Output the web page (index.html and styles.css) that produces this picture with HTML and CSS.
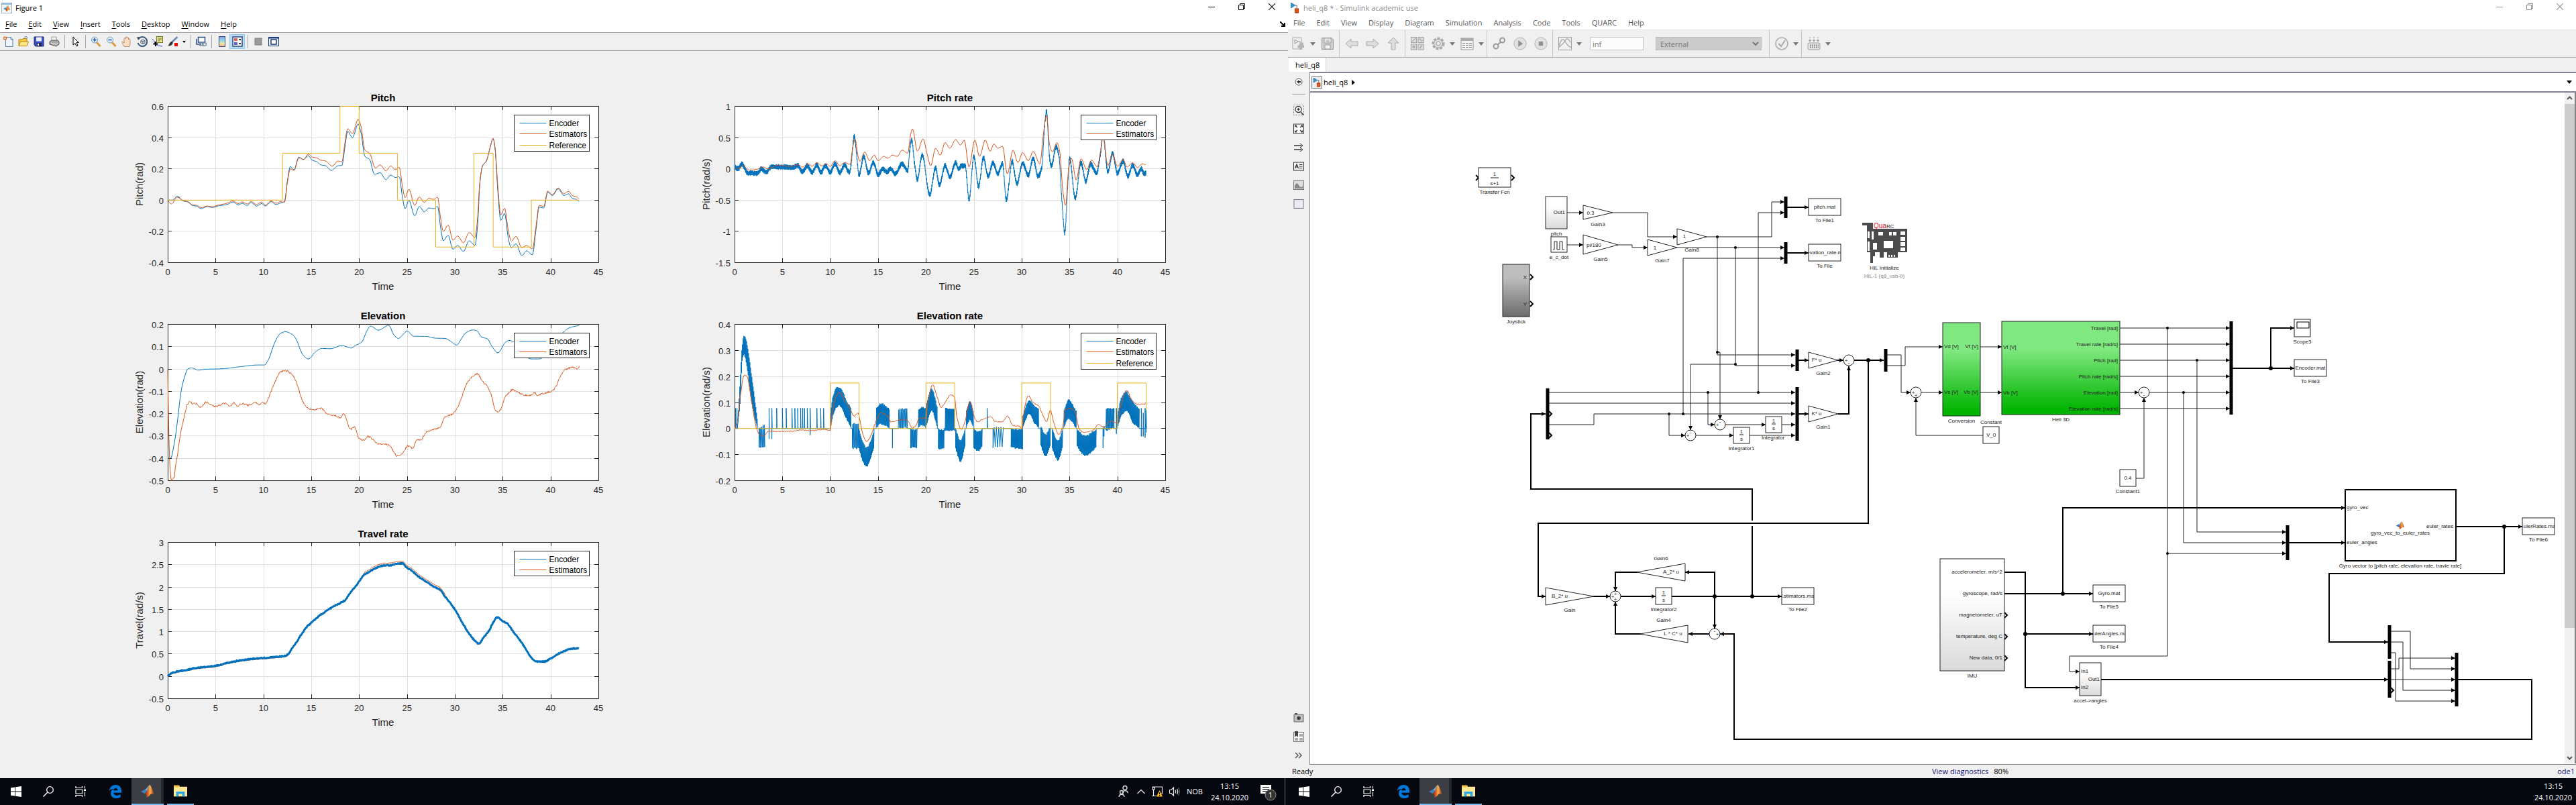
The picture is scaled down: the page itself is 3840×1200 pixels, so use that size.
FILE: index.html
```html
<!DOCTYPE html>
<html lang="en">
<head>
<meta charset="utf-8">
<title>Figure 1 / heli_q8</title>
<link rel="stylesheet" href="styles.css">
</head>
<body>
<svg class="defs" aria-hidden="true">
  <defs>
    <linearGradient id="flame" x1="0" x2="1"><stop offset="0" stop-color="#8c1d12"/><stop offset=".35" stop-color="#e0641c"/><stop offset=".55" stop-color="#f7b253"/><stop offset="1" stop-color="#a3240f"/></linearGradient>
    <linearGradient id="rainbow" x1="0" y1="0" x2="0" y2="1"><stop offset="0" stop-color="#8f9be8"/><stop offset=".4" stop-color="#8fd8e8"/><stop offset=".7" stop-color="#f3ec9a"/><stop offset="1" stop-color="#f2a488"/></linearGradient>
    <symbol id="i-matlab" viewBox="0 0 24 24"><path d="M1 13 L8 9.500 L11 12.500 L7.500 16.500 Z" fill="#3f7fc0"/><path d="M8 9.500 C11 8 13 4 15.500 2 L11 12.500 Z" fill="#6ab0d8"/><path d="M15.500 2 C18 3 20 12 23 18 C20 16 18 16 15.500 19 C14 21 12 22.500 10.500 22 C10.500 18 9.500 17 7.500 16.500 C11 14 13 7 15.500 2 Z" fill="url(#flame)"/></symbol>
    <symbol id="i-start" viewBox="0 0 16 16"><path d="M0 2.300 L6.500 1.400 V7.600 H0 Z M7.300 1.300 L16 0 V7.600 H7.300 Z M0 8.400 H6.500 V14.600 L0 13.700 Z M7.300 8.400 H16 V16 L7.300 14.700 Z" fill="#fff"/></symbol>
    <symbol id="i-search" viewBox="0 0 16 16"><circle cx="10.500" cy="5.500" r="4.800" fill="none" stroke="#fff" stroke-width="1.300"/><path d="M7 9 L.5 15.500" stroke="#fff" stroke-width="1.400"/></symbol>
    <symbol id="i-tasks" viewBox="0 0 16 16"><path d="M1 0 V2.500 H10.500 V0 M1 16 V13.500 H10.500 V16 M1 5 H10.500 V11 H1 Z M14.500 0 V3.500 M14.500 8.500 V15" fill="none" stroke="#fff" stroke-width="1.200"/><path d="M13 4.500 H16 V7 H13 Z" fill="#fff"/></symbol>
    <symbol id="i-edge" viewBox="0 0 20 22"><path d="M0 9.500 C1 3.500 5 0 10.500 0 C16.500 0 20 4.500 20 9.500 V13 H6.800 C7 17 12 18.800 18.500 15.800 V20 C12 23.500 2.500 22.500 2.300 14 C2.300 10.500 4 8 7.200 6.600 C4 6.800 1.500 7.800 0 9.500 Z M7 9.200 H14 C13.800 4 7.500 4 7 9.200 Z" fill="#0078d7" fill-rule="evenodd"/></symbol>
    <symbol id="i-folder" viewBox="0 0 22 18"><path d="M0 0 H9 L10 2 H22 V18 H0 Z" fill="#ffe793"/><path d="M0 0 H9 L8 3 H0 Z" fill="#f0c23c"/><path d="M4 18 V10 H18 V18 H14 V14 H8 V18 Z" fill="#31a6e0"/></symbol>
    <symbol id="i-model" viewBox="0 0 16 20"><path d="M1 0 L9 5 L1 10 Z" fill="#2e9bd6" stroke="#1d5b86" stroke-width=".8"/><path d="M9 5 H12 V10" fill="none" stroke="#444"/><path d="M8.500 11 H15 V19 H8.500 Z" fill="#e2521b" stroke="#8f2b08"/></symbol>
    <symbol id="i-min" viewBox="0 0 10 10"><path d="M0 5.500 H10" stroke="currentColor"/></symbol>
    <symbol id="i-max" viewBox="0 0 10 10"><path d="M.5 2.500 H7.500 V9.500 H.5 Z M2.500 2.500 V.5 H9.500 V7.500 H7.500" fill="none" stroke="currentColor"/></symbol>
    <symbol id="i-close" viewBox="0 0 10 10"><path d="M0 0 L10 10 M10 0 L0 10" stroke="currentColor" stroke-width="1.100"/></symbol>
    <symbol id="i-drop" viewBox="0 0 8 5"><path d="M0 0 H8 L4 5 Z" fill="currentColor"/></symbol>
  </defs>
</svg>

<div class="desktop">
  <section class="screen">
    <main class="window">
      <header class="titlebar">
        <span class="title"><svg class="app-icon" viewBox="0 0 16 16"><rect x=".5" y=".5" width="15" height="15" fill="#f2f6fa" stroke="#9fb4c8"/><rect x="1" y="1" width="14" height="2" fill="#8fc3ea"/><use href="#i-matlab" x="2" y="3" width="12" height="11"/></svg>Figure 1</span>
        <span class="controls"><button aria-label="Minimize"><svg><use href="#i-min"/></svg></button><button aria-label="Restore"><svg><use href="#i-max"/></svg></button><button aria-label="Close"><svg><use href="#i-close"/></svg></button></span>
      </header>
      <nav class="menubar menubar-figure">
        <button><u>F</u>ile</button><button><u>E</u>dit</button><button><u>V</u>iew</button><button><u>I</u>nsert</button><button><u>T</u>ools</button><button><u>D</u>esktop</button><button><u>W</u>indow</button><button><u>H</u>elp</button>
        <svg class="dock" viewBox="0 0 8 8"><path d="M0 0 L6 6 M7 2 V7 H2" fill="none" stroke="#000" stroke-width="2"/></svg>
      </nav>
      <div class="tools">
        <button aria-label="New figure"><svg viewBox="0 0 16 16"><path d="M4.500 1.500 H12 L15 4.500 V15.500 H4.500 Z" fill="#eef5ff" stroke="#5b7fae"/><path d="M12 1.500 V4.500 H15" fill="none" stroke="#5b7fae"/><circle cx="3.500" cy="3" r="2" fill="#fff" stroke="#e06c2a" stroke-width="1.500"/></svg></button>
        <button aria-label="Open"><svg viewBox="0 0 16 16"><path d="M1 5 H6 L7 3.500 H13 V14.500 H1 Z" fill="#f6c944" stroke="#b58513"/><path d="M3.500 8 H15.500 L13 14.500 H1 Z" fill="#ffe88c" stroke="#b58513"/><path d="M9 2 C11 0 13 0 14 3" fill="none" stroke="#3a6ea5"/></svg></button>
        <button aria-label="Save"><svg viewBox="0 0 16 16"><path d="M1 1 H15 V15 H3 L1 13 Z" fill="#3d4fc0" stroke="#1e2b7a"/><rect x="4" y="1.500" width="8" height="6" fill="#e8efff"/><rect x="5" y="10" width="7" height="5" fill="#222a55"/><rect x="6" y="11" width="2" height="3" fill="#fff"/></svg></button>
        <button aria-label="Print"><svg viewBox="0 0 16 16"><path d="M4 1 L11 1 L12 7 H4 Z" fill="#f7f7f7" stroke="#999"/><path d="M1 8 L4 6 H13 L15 8 V12 L11 15 L1 12 Z" fill="#a9a9a9" stroke="#5c5c5c"/><path d="M3 10 L11 12 L14 10" fill="none" stroke="#e8e8e8"/></svg></button>
        <i class="sep"></i>
        <button aria-label="Edit plot"><svg viewBox="0 0 16 16"><path d="M5 1 V13 L8 10.500 L10 15 L12 14 L10 9.500 H13.500 Z" fill="#fff" stroke="#000"/></svg></button>
        <i class="sep"></i>
        <button aria-label="Zoom in"><svg viewBox="0 0 16 16"><path d="M9 9 L14.500 15" stroke="#e09a3e" stroke-width="3"/><circle cx="6" cy="5.500" r="4.500" fill="#dceffc" stroke="#7a97b5"/><path d="M6 3 V8 M3.500 5.500 H8.500" stroke="#1c4fa0" stroke-width="1.500"/></svg></button>
        <button aria-label="Zoom out"><svg viewBox="0 0 16 16"><path d="M9 9 L14.500 15" stroke="#e09a3e" stroke-width="3"/><circle cx="6" cy="5.500" r="4.500" fill="#dceffc" stroke="#7a97b5"/><path d="M3.500 5.500 H8.500" stroke="#1c4fa0" stroke-width="1.500"/></svg></button>
        <button aria-label="Pan"><svg viewBox="0 0 16 16"><path d="M4 15 L1 9.500 C0 8 2 7.500 3 9 L4 10 V4 C4 2 6 2 6 4 V2 C6 .5 8 .5 8 2 V2.500 C8 1 10.500 1 10.500 3 V5 C11 3.500 13 4 13 5.500 V11 L12 15.500 H5 Z" fill="#fbe0c6" stroke="#a9764f" stroke-width=".8"/></svg></button>
        <button aria-label="Rotate 3D"><svg viewBox="0 0 16 16"><path d="M2.500 4 A7 7 0 1 1 1.500 10" fill="none" stroke="#3d5673" stroke-width="2"/><path d="M0 1 L6 1.500 L2 6 Z" fill="#3d5673"/><path d="M6 6.500 L9 5 L12 6.500 V10 L9 11.500 L6 10 Z M6 6.500 L9 8 L12 6.500 M9 8 V11.500" fill="none" stroke="#3d5673"/></svg></button>
        <button aria-label="Data cursor"><svg viewBox="0 0 16 16"><rect x="6.500" y=".5" width="9" height="9" fill="#f0eea0" stroke="#77752a"/><path d="M8 3 H14 M8 5 H14 M8 7 H12" stroke="#77752a"/><path d="M0 4 Q3 6 4 11 Q8 15 15 15" fill="none" stroke="#3648e0"/><path d="M5 8 V15 M1.500 11.500 H8.500" stroke="#000" stroke-width="2"/></svg></button>
        <button aria-label="Brush"><svg viewBox="0 0 16 16"><path d="M14.500 1 L6 9" stroke="#6d86b8" stroke-width="2.500"/><path d="M7 8 C9 11 6 15 0 14 C3 13 2 8 7 8 Z" fill="#333"/><rect x="10" y="10" width="5" height="5" fill="#f00"/></svg></button>
        <button class="drop" aria-label="Brush colour"><svg><use href="#i-drop"/></svg></button>
        <i class="sep"></i>
        <button aria-label="Link plot"><svg viewBox="0 0 16 16"><path d="M3.500 1.500 H13.500 V9 H3.500 Z" fill="#fff" stroke="#2b4a7c" stroke-width="1.500"/><path d="M1 4 V12 H8" fill="none" stroke="#2b4a7c" stroke-width="1.500"/><rect x="5" y="10" width="6" height="4" rx="2" fill="none" stroke="#7b90a8" stroke-width="1.500"/><rect x="9.500" y="10" width="6" height="4" rx="2" fill="none" stroke="#7b90a8" stroke-width="1.500"/></svg></button>
        <i class="sep"></i>
        <button aria-label="Insert colorbar"><svg viewBox="0 0 16 16"><rect x="3.500" y=".5" width="9" height="15" fill="url(#rainbow)" stroke="#2b4a7c"/></svg></button>
        <button class="on" aria-label="Insert legend"><svg viewBox="0 0 16 16"><rect x="1" y="1" width="14" height="14" fill="#fff" stroke="#2b4a7c" stroke-width="1.500"/><rect x="3" y="3" width="5" height="4" fill="#e8605c"/><rect x="3" y="9" width="5" height="4" fill="#5c60e8"/><path d="M10 5 H13 M10 11 H13" stroke="#000" stroke-width="1.500"/></svg></button>
        <i class="sep"></i>
        <button aria-label="Hide plot tools"><svg viewBox="0 0 16 16"><rect x="3" y="3" width="10" height="10" fill="#9a9a9a" stroke="#7e7e7e"/></svg></button>
        <button aria-label="Show plot tools"><svg viewBox="0 0 16 16"><rect x=".5" y="1.500" width="15" height="13" fill="#eef3fa" stroke="#1e3c74"/><rect x=".5" y="1.500" width="15" height="2" fill="#1e3c74"/><rect x="4" y="5" width="8" height="7" fill="#fff" stroke="#1e3c74" stroke-width="1.500"/></svg></button>
      </div>
      <div class="figure" id="figure"></div>
    </main>
    <footer class="taskbar">
      <button aria-label="Start"><svg class="g16"><use href="#i-start"/></svg></button>
      <button aria-label="Search"><svg class="g16"><use href="#i-search"/></svg></button>
      <button aria-label="Task view"><svg class="g16"><use href="#i-tasks"/></svg></button>
      <button class="task" aria-label="Edge"><svg class="g20"><use href="#i-edge"/></svg></button>
      <button class="active" aria-label="MATLAB"><svg class="g24"><use href="#i-matlab"/></svg></button>
      <button class="running" aria-label="File Explorer"><svg class="g20"><use href="#i-folder"/></svg></button>
      <div class="tray">
        <svg class="g20" viewBox="0 0 20 20"><g fill="none" stroke="#ddd" stroke-width="1.400"><circle cx="12" cy="4.500" r="3"/><path d="M8.500 12 C9 8 15 7 16.500 12"/><circle cx="7" cy="11" r="2.500"/><path d="M3 18 C3.500 13 10.500 13 11 18"/></g></svg>
        <svg class="g12" viewBox="0 0 12 12"><path d="M.5 9 L6 3.500 L11.500 9" fill="none" stroke="#ddd" stroke-width="1.400"/></svg>
        <svg class="g16" viewBox="0 0 16 16"><path d="M3 3 V1 H15.500 V11 H9 M1 1 H4 V5 H1 Z M2.500 5 V14 M0 14.500 H7" fill="none" stroke="#eee" stroke-width="1.200"/><path d="M11.500 6 L16 15.500 H7 Z" fill="#fdb813"/><path d="M11.500 9 V12 M11.500 13 V14.500" stroke="#000"/></svg>
        <svg class="g16" viewBox="0 0 16 16"><path d="M.5 5.500 H3 L6.500 2 V14 L3 10.500 H.5 Z M9 5.500 Q10.500 8 9 10.500 M11.500 4 Q14 8 11.500 12" fill="none" stroke="#eee" stroke-width="1.200"/><path d="M13.500 2 Q17 8 13.500 14" fill="none" stroke="#777"/></svg>
        <span class="lang">NOB</span>
        <time class="clock">13:15<br>24.10.2020</time>
        <svg class="notice" viewBox="0 0 28 28"><path d="M2 4 H18 V17 H13 L9 21 V17 H2 Z" fill="#fff"/><path d="M5 7.500 H15 M5 10.500 H15 M5 13.500 H11" stroke="#000" stroke-width="1.200"/><circle cx="17" cy="19" r="8" fill="#333" stroke="#8b8b8b"/><text x="17" y="23" class="badge">1</text></svg>
        <i class="peek"></i>
      </div>
    </footer>
  </section>

  <section class="screen">
    <main class="window">
      <header class="titlebar inactive">
        <span class="title"><svg class="app-icon"><use href="#i-model"/></svg>heli_q8 * - Simulink academic use</span>
        <span class="controls"><button aria-label="Minimize"><svg><use href="#i-min"/></svg></button><button aria-label="Restore"><svg><use href="#i-max"/></svg></button><button aria-label="Close"><svg><use href="#i-close"/></svg></button></span>
      </header>
      <nav class="menubar menubar-model">
        <button>File</button><button>Edit</button><button>View</button><button>Display</button><button>Diagram</button><button>Simulation</button><button>Analysis</button><button>Code</button><button>Tools</button><button>QUARC</button><button>Help</button>
      </nav>
      <div class="ribbon">
        <button aria-label="New model"><svg viewBox="0 0 20 20"><path d="M1 1 H14 V18 H1 Z" fill="#eee" stroke="#aaa"/><path d="M4 4 L9 7 L4 10 Z M9 7 H12 V12" fill="none" stroke="#999"/><path d="M11 12 H15 V8.500 M13 10 V19 M8.500 14.500 H18" stroke="#b5b5b5" stroke-width="4"/></svg></button><button class="drop" aria-label="New options"><svg><use href="#i-drop"/></svg></button>
        <button aria-label="Save model"><svg viewBox="0 0 20 20"><path d="M1.500 1.500 H16 L18.500 4 V18.500 H1.500 Z" fill="#ccc" stroke="#999"/><path d="M5 2 H15 V9 H5 Z M6 12 H14 V18 H6 Z" fill="#f4f4f4" stroke="#999"/><path d="M7 5 H13 M7 7 H13" stroke="#999"/></svg></button>
        <i class="sep"></i>
        <button aria-label="Back"><svg viewBox="0 0 20 20"><path d="M1 10 L9 3 V7 H19 V13 H9 V17 Z" fill="#ddd" stroke="#aaa"/></svg></button>
        <button aria-label="Forward"><svg viewBox="0 0 20 20"><path d="M19 10 L11 3 V7 H1 V13 H11 V17 Z" fill="#ddd" stroke="#aaa"/></svg></button>
        <button aria-label="Up to parent"><svg viewBox="0 0 20 20"><path d="M10 1 L18 9 H13 V19 H7 V9 H2 Z" fill="#ddd" stroke="#aaa"/></svg></button>
        <i class="sep"></i>
        <button aria-label="Library browser"><svg viewBox="0 0 22 22"><g fill="#ddd" stroke="#999"><rect x=".5" y=".5" width="9" height="9"/><rect x="12" y=".5" width="9" height="9"/><rect x=".5" y="12" width="9" height="9"/><rect x="12" y="12" width="9" height="9"/></g><path d="M2 8 L8 2 M13 5 Q15 1 16.500 5 T20 5 M3.500 15 H6.500 V18 H3.500 Z M14 18 H16.500 V14.500 H19" fill="none" stroke="#888"/></svg></button>
        <button aria-label="Model configuration"><svg viewBox="0 0 20 20"><circle cx="10" cy="10" r="8" fill="none" stroke="#aaa" stroke-width="3" stroke-dasharray="4 2"/><circle cx="10" cy="10" r="6.500" fill="#ddd" stroke="#999"/><circle cx="10" cy="10" r="3" fill="#f0f0f0" stroke="#999"/></svg></button><button class="drop" aria-label="Configuration options"><svg><use href="#i-drop"/></svg></button>
        <button aria-label="Model explorer"><svg viewBox="0 0 20 20"><rect x="1" y="2" width="18" height="17" fill="#f4f4f4" stroke="#999"/><rect x="1" y="2" width="18" height="4" fill="#aaa"/><path d="M3 9.500 H17 M3 12.500 H17 M3 15.500 H17" stroke="#888" stroke-dasharray="4 1"/></svg></button><button class="drop" aria-label="Explorer options"><svg><use href="#i-drop"/></svg></button>
        <i class="sep"></i>
        <button aria-label="Connect to target"><svg viewBox="0 0 20 20"><g fill="none" stroke="#999" stroke-width="2"><circle cx="5" cy="14" r="3.500"/><circle cx="14.500" cy="5" r="3.500"/><path d="M7 12 L13 7"/></g></svg></button>
        <button aria-label="Run"><svg viewBox="0 0 22 22"><circle cx="11" cy="11" r="10" fill="#e2e2e2" stroke="#aaa"/><path d="M8 5.500 L15.500 11 L8 16.500 Z" fill="#909090"/></svg></button>
        <button aria-label="Stop"><svg viewBox="0 0 22 22"><circle cx="11" cy="11" r="10" fill="#e2e2e2" stroke="#aaa"/><path d="M7.500 7.500 H14.500 V14.500 H7.500 Z" fill="#909090"/></svg></button>
        <i class="sep"></i>
        <button aria-label="Data inspector"><svg viewBox="0 0 22 22"><rect x=".5" y=".5" width="21" height="21" fill="#f0f0f0" stroke="#999"/><path d="M1 15 Q6 -3 12 9 Q16 16 21 17 M1 17 Q9 10 12 5 T20 9" fill="none" stroke="#aaa" stroke-width="1.500"/></svg></button><button class="drop" aria-label="Inspector options"><svg><use href="#i-drop"/></svg></button>
        <input class="stop-time" type="text" value="inf" aria-label="Simulation stop time">
        <select class="mode" aria-label="Simulation mode"><option>External</option></select>
        <i class="sep"></i>
        <button aria-label="Model advisor"><svg viewBox="0 0 20 20"><circle cx="10" cy="10" r="9" fill="#eee" stroke="#aaa" stroke-width="1.500"/><path d="M5.500 10 L9 14 L15 5" fill="none" stroke="#aaa" stroke-width="2"/></svg></button><button class="drop" aria-label="Advisor options"><svg><use href="#i-drop"/></svg></button>
        <i class="sep"></i>
        <button aria-label="Build"><svg viewBox="0 0 20 20"><path d="M4 0 V6 M10 0 V6 M16 0 V6" stroke="#999" stroke-dasharray="2 1"/><path d="M2 5 L4 7.500 L6 5 Z M8 5 L10 7.500 L12 5 Z M14 5 L16 7.500 L18 5 Z" fill="#999"/><rect x="1" y="9" width="18" height="10" rx="2" fill="#e8e8e8" stroke="#999"/><path d="M4 12.500 H17 M4 15.500 H17" stroke="#888" stroke-width="2" stroke-dasharray="2 1"/></svg></button><button class="drop" aria-label="Build options"><svg><use href="#i-drop"/></svg></button>
      </div>
      <div class="tabs"><a class="tab" href="#model">heli_q8</a></div>
      <div class="editor">
        <aside class="palette">
          <button aria-label="Hide browser"><svg viewBox="0 0 16 16"><circle cx="8" cy="8" r="5" fill="#fff" stroke="#555"/><path d="M5 8 L8.500 5 V7 H11 V9 H8.500 V11 Z" fill="#333"/></svg></button>
          <i class="rule"></i>
          <button aria-label="Zoom"><svg viewBox="0 0 16 16"><rect x=".5" y=".5" width="15" height="15" fill="none" stroke="#777" stroke-dasharray="2 2"/><circle cx="7.500" cy="7" r="4.500" fill="#fff" stroke="#333" stroke-width="1.300"/><path d="M7.500 5 V9 M5.500 7 H9.500 M11 11 L15 15.500" stroke="#333" stroke-width="1.500"/></svg></button>
          <button aria-label="Fit to view"><svg viewBox="0 0 16 16"><rect x=".5" y="1" width="15" height="14" fill="#fff" stroke="#333"/><path d="M2.500 5.500 V3 H5 M11 3 H13.500 V5.500 M13.500 10.500 V13 H11 M5 13 H2.500 V10.500 M3 3.500 L6 6 M13 3.500 L10 6 M13 12.500 L10 10 M3 12.500 L6 10" fill="none" stroke="#333" stroke-width="1.200"/></svg></button>
          <button aria-label="Signal lines"><svg viewBox="0 0 16 16"><path d="M1 5 H12 M1 11 H12" stroke="#333" stroke-width="1.300"/><path d="M10 2 L14 5 L10 8 M10 8 L14 11 L10 14" fill="none" stroke="#333"/></svg></button>
          <button aria-label="Annotation"><svg viewBox="0 0 16 16"><rect x=".5" y="2" width="15" height="12" fill="#f4f4f4" stroke="#333"/><path d="M2.500 11 L5 5 L7.500 11 M3.500 9 H6.500 M9 5.500 H13.500 M9 8 H13.500 M9 10.500 H13.500" fill="none" stroke="#222" stroke-width="1.200"/></svg></button>
          <button aria-label="Image"><svg viewBox="0 0 16 16"><rect x=".5" y="1.500" width="15" height="13" fill="#ddd" stroke="#777"/><path d="M2 13 V9 Q5 2 8 8 T14 9 V13 Z" fill="#888"/></svg></button>
          <button aria-label="Area"><svg viewBox="0 0 16 16"><rect x="1" y="1.500" width="14" height="13" fill="#ebebfa" stroke="#777"/></svg></button>
          <span class="grow"></span>
          <button aria-label="Screenshot"><svg viewBox="0 0 16 16"><path d="M1 3 H15 V14 H1 Z" fill="#bbb" stroke="#666"/><path d="M2 2 H6" stroke="#555" stroke-width="2"/><circle cx="8" cy="8.500" r="4" fill="#666" stroke="#eee"/><circle cx="8" cy="8.500" r="1.500" fill="#222"/></svg></button>
          <button aria-label="Bookmarks"><svg viewBox="0 0 16 16"><rect x=".5" y="1.500" width="15" height="14" fill="#fff" stroke="#777"/><path d="M9 4 H14 V8 H9 Z M2 10 H7 V14 H2 Z M9 10 H14 V14 H9 Z" fill="#aaa"/><path d="M2 0 H7 V9 L4.500 6.500 L2 9 Z" fill="#444"/></svg></button>
          <button aria-label="More"><svg viewBox="0 0 16 16"><path d="M3 4 L7 8 L3 12 M8 4 L12 8 L8 12" fill="none" stroke="#555" stroke-width="1.500"/></svg></button>
        </aside>
        <div class="document">
          <div class="crumbs"><svg class="crumb-icon" viewBox="0 0 16 18"><rect x=".5" y=".5" width="15" height="17" fill="#eee" stroke="#777"/><use href="#i-model" x="2" y="2" width="12" height="14"/></svg><a href="#model">heli_q8</a><svg class="crumb-arrow" viewBox="0 0 6 10"><path d="M0 0 L6 5 L0 10 Z"/></svg><button class="history" aria-label="History"><svg><use href="#i-drop"/></svg></button></div>
          <div class="canvas-row">
            <svg class="model" id="model" viewBox="1953 138 1870 1000">
              <defs>
                <marker id="head" viewBox="0 0 6 6" refX="6" refY="3" markerWidth="6" markerHeight="6" markerUnits="userSpaceOnUse" orient="auto"><path d="M0 0 L6 3 L0 6 Z"/></marker>
                <linearGradient id="green" x1="0" y1="0" x2="0" y2="1"><stop offset=".3" stop-color="#80e880"/><stop offset=".95" stop-color="#00b400"/></linearGradient>
                <linearGradient id="pale" x1="0" y1="0" x2="0" y2="1"><stop offset=".3" stop-color="#fff"/><stop offset="1" stop-color="#dadada"/></linearGradient>
                <linearGradient id="grey" x1="0" y1="0" x2="0" y2="1"><stop offset=".25" stop-color="#bdbdbd"/><stop offset="1" stop-color="#6c6c6c"/></linearGradient>
                <clipPath id="c1"><rect x="2697" y="365" width="47" height="24"/></clipPath>
                <clipPath id="c2"><rect x="2657" y="877" width="47" height="24"/></clipPath>
                <clipPath id="c3"><rect x="3761" y="773" width="47" height="24"/></clipPath>
                <clipPath id="c4"><rect x="3121" y="933" width="47" height="24"/></clipPath>
              </defs>

              <g class="bus">
                <path d="M2612 889 V729 H2282 V617 H2304"/>
                <path class="gap" d="M2605 780 H2619"/>
                <path d="M2785 537 V780 H2293 V889 H2304"/>
                <path d="M2664 309 H2696"/><path d="M2664 377 H2696"/>
                <path d="M2681 537 H2696"/><path d="M2738 537 H2748"/><path d="M2764 537 H2808"/>
                <path d="M2681 617 H2696"/><path d="M2740 617 H2756 V546"/>
                <path d="M2374 889 H2400"/><path d="M2416 889 H2468"/><path d="M2492 889 H2656"/>
                <path d="M2556 889 V853 H2512"/><path d="M2442 853 H2408 V881"/>
                <path d="M2556 889 V937"/><path d="M2548 945 H2517"/><path d="M2447 945 H2408 V897"/>
                <path d="M3664 1013 H3774 V1102 H2585 V945 H2564"/>
                <path d="M3328 549 H3420"/><path d="M3385 549 V489 H3420"/>
                <path d="M3412 809 H3496"/><path d="M3661 785 H3760"/><path d="M3733 785 V855 H3472 V957 H3560"/>
                <path d="M2988 853 H3019 V1025 H3100"/><path d="M2988 885 H3120"/><path d="M3019 945 H3120"/>
                <path d="M3075 885 V757 H3496"/><path d="M3132 1013 H3560"/>
              </g>
              <g class="wire">
                <path d="M2336 317 H2360"/><path d="M2404 317 H2456 V353 H2500"/><path d="M2336 365 H2360"/><path d="M2412 365 H2433 V369 H2456"/>
                <path d="M2544 353 H2641 V301 H2660"/><path d="M2560 353 V529 H2676"/><path d="M2560 525 H2564 V625"/>
                <path d="M2500 369 H2660"/><path d="M2587 369 V545 H2676"/><path d="M2587 543 H2520 V641"/>
                <path d="M2509 617 V385 H2660"/><path d="M2621 585 V317 H2660"/>
                <path d="M2309 585 H2676"/><path d="M2309 601 H2676"/><path d="M2309 633 H2376 V617 H2676"/>
                <path d="M2546 585 V633 H2556"/><path d="M2488 617 V649 H2512"/>
                <path d="M2572 633 H2632"/><path d="M2656 633 H2676"/><path d="M2528 649 H2584"/><path d="M2608 649 H2676"/>
                <path d="M2813 529 H2834 V585 H2848"/><path d="M2813 545 H2840 V517 H2896"/><path d="M2864 585 H2896"/><path d="M2956 649 H2856 V593"/>
                <path d="M2952 517 H2984"/><path d="M2952 585 H2984"/>
                <path d="M3160 489 H3324"/><path d="M3160 513 H3324"/><path d="M3160 537 H3324"/><path d="M3160 561 H3324"/><path d="M3160 585 H3188"/><path d="M3204 585 H3324"/><path d="M3160 609 H3324"/>
                <path d="M3184 713 H3196 V593"/>
                <path d="M3231 489 V978 H3085 V1001 H3100"/><path d="M3231 825 H3408"/><path d="M3255 585 V809 H3408"/><path d="M3275 537 V793 H3408"/>
                <path d="M3564 941 H3593 V997 H3660"/><path d="M3564 957 H3582 V1029 H3660"/><path d="M3564 973 H3571 V1045 H3660"/><path d="M3564 997 H3576 V981 H3660"/><path d="M3564 1013 H3660"/>
              </g>
              <g class="node">
                <circle cx="2560" cy="353" r="2"/><circle cx="2560" cy="525" r="2"/><circle cx="2587" cy="369" r="2"/><circle cx="2587" cy="543" r="2"/><circle cx="2509" cy="617" r="2"/><circle cx="2621" cy="585" r="2"/><circle cx="2546" cy="585" r="2"/><circle cx="2488" cy="617" r="2"/><circle cx="3231" cy="489" r="2"/><circle cx="3275" cy="537" r="2"/><circle cx="3255" cy="585" r="2"/><circle cx="3231" cy="825" r="2"/>
                <circle cx="2785" cy="537" r="3"/><circle cx="2556" cy="889" r="3"/><circle cx="2612" cy="889" r="3"/><circle cx="3385" cy="549" r="3"/><circle cx="3733" cy="785" r="3"/><circle cx="3075" cy="885" r="3"/><circle cx="3019" cy="945" r="3"/>
              </g>
              <g class="mux">
                <path d="M2662 293 V325 M2662 361 V393 M2679 521 V553 M2679 577 V657 M2307 579 V655 M2811 520 V554"/>
                <path d="M3326 479 V618 M3410 783 V835 M3562 932 V982 M3562 985 V1040 M3662 973 V1053"/>
              </g>
              <g class="port">
                <path d="M2200 261 L2204 265 L2200 269 M2253 261 L2257 265 L2253 269 M2281 409 L2285 413 L2281 417 M2281 449 L2285 453 L2281 457 M2309 613 L2313 617 L2309 621 M2309 645 L2313 649 L2309 653 M2988 913 L2992 917 L2988 921 M2988 945 L2992 949 L2988 953 M2988 977 L2992 981 L2988 985 M3564 1025 L3568 1029 L3564 1033"/>
              </g>
              <g class="block">
                <rect x="2204" y="250" width="48" height="29"/><path d="M2222 265 H2234"/>
                <rect x="2304" y="293" width="32" height="48" fill="url(#pale)"/><rect x="2312" y="353" width="24" height="23"/><path d="M2315 372 H2317 V360 H2321 V372 H2325 V360 H2329 V372 H2332"/>
                <rect x="2240" y="394" width="40" height="78" fill="url(#grey)"/>
                <path d="M2360 306 V327 L2404 317 Z M2360 350 V379 L2412 365 Z M2456 357 V381 L2500 369 Z M2500 341 V365 L2544 353 Z M2696 525 V549 L2740 537 Z M2696 605 V629 L2740 617 Z M2304 876 V902 L2376 889 Z M2512 840 V866 L2440 853 Z M2516 932 V958 L2445 945 Z"/>
                <rect x="2696" y="296" width="48" height="25"/><rect x="2696" y="364" width="48" height="25"/>
                <circle cx="2756" cy="537" r="8"/><circle cx="2564" cy="633" r="8"/><circle cx="2520" cy="649" r="8"/><circle cx="2856" cy="585" r="8"/><circle cx="3196" cy="585" r="8"/><circle cx="2408" cy="889" r="8"/><circle cx="2556" cy="945" r="8"/>
                <rect x="2632" y="621" width="24" height="24"/><rect x="2584" y="637" width="24" height="24"/><rect x="2468" y="876" width="24" height="25"/><path d="M2641 632 H2647 M2593 648 H2599 M2477 888 H2483"/>
                <rect x="2656" y="876" width="48" height="25"/>
                <rect x="2896" y="481" width="56" height="139" fill="url(#green)"/><rect x="2984" y="479" width="176" height="139" fill="url(#green)"/>
                <rect x="2956" y="636" width="24" height="25"/><rect x="3160" y="700" width="24" height="25"/>
                <rect x="3420" y="476" width="24" height="26"/><rect class="screen-glass" x="3424" y="480" width="18" height="9"/><rect x="3420" y="536" width="48" height="25"/>
                <rect class="heavy" x="3496" y="730" width="165" height="106"/><rect x="3760" y="772" width="48" height="25"/>
                <rect x="2892" y="833" width="96" height="167" fill="url(#pale)"/><rect x="3120" y="872" width="48" height="25"/><rect x="3120" y="932" width="48" height="25"/><rect x="3100" y="988" width="32" height="49" fill="url(#pale)"/>
              </g>
              <use href="#i-matlab" x="3571" y="776" width="14" height="14"/>
              <g class="board">
                <path d="M2776 332 H2792 V341 H2843 V376 H2829 V384 H2813 V376 H2808 V384 H2802 V376 H2795 V382 H2792 V392 H2788 V376 H2783 V336 H2776 Z"/>
                <path class="hole" d="M2784 345 H2787 V355 H2784 Z M2784 360 H2787 V374 H2784 Z M2790 345 H2793 V357 H2790 Z M2792 362 H2798 V372 H2792 Z M2800 346 H2807 V351 H2800 Z M2816 346 H2820 V351 H2816 Z M2822 346 H2827 V351 H2822 Z M2833 345 H2840 V350 H2833 Z M2833 353 H2840 V359 H2833 Z M2833 361 H2840 V367 H2833 Z M2833 369 H2840 V374 H2833 Z M2808 359 H2822 V370 H2808 Z M2815 380 H2817 V383 H2815 Z M2819 380 H2821 V383 H2819 Z M2823 380 H2825 V383 H2823 Z"/>
              </g>
              <text class="quarc" x="2793" y="340"><tspan class="red">Qua</tspan><tspan class="dark">RC</tspan></text>

              <g class="label mid">
                <text x="2228" y="262">1</text><text x="2228" y="276">s+1</text><text x="2228" y="289">Transfer Fcn</text>
                <text x="2320" y="351">pitch</text><text x="2324" y="386">e_c_dot</text><text x="2260" y="482">Joystick</text>
                <text x="2371" y="320">0.3</text><text x="2382" y="337">Gain3</text><text x="2376" y="368">pi/180</text><text x="2386" y="389">Gain5</text>
                <text x="2467" y="372">1</text><text x="2478" y="391">Gain7</text><text x="2511" y="355">1</text><text x="2522" y="375">Gain8</text>
                <text x="2720" y="311">pitch.mat</text><text x="2720" y="331">To File1</text><text x="2720" y="379" clip-path="url(#c1)">elevation_rate.mat</text><text x="2720" y="399">To File</text>
                <text x="2809" y="402">HIL Initialize</text><text class="dim" x="2809" y="414">HIL-1 (q8_usb-0)</text>
                <text x="2708" y="539">F* u</text><text x="2718" y="559">Gain2</text><text x="2708" y="619">K* u</text><text x="2718" y="639">Gain1</text>
                <text x="2644" y="630">1</text><text x="2644" y="641">s</text><text x="2643" y="655">Integrator</text>
                <text x="2596" y="646">1</text><text x="2596" y="657">s</text><text x="2596" y="671">Integrator1</text>
                <text x="2325" y="891">B_2* u</text><text x="2340" y="912">Gain</text><text x="2491" y="855">A_2* u</text><text x="2476" y="835">Gain6</text>
                <text x="2480" y="886">1</text><text x="2480" y="897">s</text><text x="2480" y="911">Integrator2</text><text x="2480" y="927">Gain4</text><text x="2494" y="947">L * C* u</text>
                <text x="2680" y="891" clip-path="url(#c2)">Estimators.mat</text><text x="2680" y="911">To File2</text>
                <text x="2924" y="630">Conversion</text><text x="2968" y="632">Constant</text><text x="2968" y="651">V_0</text><text x="3072" y="628">Heli 3D</text>
                <text x="3172" y="715">0.4</text><text x="3172" y="735">Constant1</text><text x="3432" y="512">Scope3</text><text x="3444" y="551">Encoder.mat</text><text x="3444" y="571">To File3</text>
                <text x="3578" y="797">gyro_vec_to_euler_rates</text><text x="3578" y="846">Gyro vector to [pitch rate, elevation rate, travle rate]</text>
                <text x="3784" y="787" clip-path="url(#c3)">EulerRates.mat</text><text x="3784" y="807">To File6</text>
                <text x="3144" y="887">Gyro.mat</text><text x="3144" y="907">To File5</text><text x="3144" y="947" clip-path="url(#c4)">EulerAngles.mat</text><text x="3144" y="967">To File4</text>
                <text x="2940" y="1010">IMU</text><text x="3116" y="1047">accel-&gt;angles</text>
                <text x="2752" y="540">+</text><text x="2756" y="543">-</text><text x="2560" y="636">+</text><text x="2564" y="631">-</text><text x="2516" y="652">+</text><text x="2520" y="647">-</text>
                <text x="2852" y="588">+</text><text x="2856" y="592">+</text><text x="3192" y="588">+</text><text x="3196" y="591">-</text>
                <text x="2404" y="892">+</text><text x="2408" y="888">+</text><text x="2408" y="896">+</text><text x="2560" y="948">+</text><text x="2556" y="943">-</text>
              </g>
              <g class="label">
                <text x="2898" y="519">Vd [V]</text><text x="2898" y="587">Vs [V]</text><text x="2986" y="520">Vf [V]</text><text x="2986" y="588">Vb [V]</text>
                <text x="3498" y="759">gyro_vec</text><text x="3498" y="811">euler_angles</text><text x="3102" y="1003">In1</text><text x="3102" y="1027">In2</text>
              </g>
              <g class="label end">
                <text x="2333" y="319">Out1</text><text x="2276" y="416">X</text><text x="2276" y="456">Y</text>
                <text x="2949" y="519">Vf [V]</text><text x="2949" y="587">Vb [V]</text>
                <text x="3157" y="492">Travel [rad]</text><text x="3157" y="516">Travel rate [rad/s]</text><text x="3157" y="540">Pitch [rad]</text><text x="3157" y="564">Pitch rate [rad/s]</text><text x="3157" y="588">Elevation [rad]</text><text x="3157" y="612">Elevation rate [rad/s]</text>
                <text x="3657" y="787">euler_rates</text><text x="3130" y="1015">Out1</text>
                <text x="2985" y="855">accelerometer, m/s^2</text><text x="2985" y="887">gyroscope, rad/s</text><text x="2985" y="919">magnetometer, uT</text><text x="2985" y="951">temperature, deg C</text><text x="2985" y="983">New data, 0/1</text>
              </g>
            </svg>
            <div class="scrollbar"><svg viewBox="0 0 15 17"><path d="M4 10 L7.500 6.500 L11 10" fill="none" stroke="#555" stroke-width="2"/></svg><i class="thumb"></i><i class="track"></i><svg viewBox="0 0 15 17"><path d="M4 7 L7.500 10.500 L11 7" fill="none" stroke="#555" stroke-width="2"/></svg></div>
          </div>
        </div>
      </div>
      <div class="status"><span>Ready</span><span class="centre"><a href="#diagnostics">View diagnostics</a><span>80%</span></span><a href="#solver">ode1</a></div>
    </main>
    <footer class="taskbar">
      <button aria-label="Start"><svg class="g16"><use href="#i-start"/></svg></button>
      <button aria-label="Search"><svg class="g16"><use href="#i-search"/></svg></button>
      <button aria-label="Task view"><svg class="g16"><use href="#i-tasks"/></svg></button>
      <button class="task" aria-label="Edge"><svg class="g20"><use href="#i-edge"/></svg></button>
      <button class="active" aria-label="MATLAB"><svg class="g24"><use href="#i-matlab"/></svg></button>
      <button class="running" aria-label="File Explorer"><svg class="g20"><use href="#i-folder"/></svg></button>
      <div class="tray"><time class="clock">13:15<br>24.10.2020</time></div>
    </footer>
  </section>
</div>
<script src="script.js"></script>
</body>
</html>
```
FILE: styles.css
```css
* { box-sizing: border-box; }
body { margin: 0; background: #f0f0f0; color: #000; font: 11px/16px "Open Sans", "Noto Sans", sans-serif; }
button { border: 0; padding: 0; background: none; font: inherit; color: inherit; display: flex; align-items: center; justify-content: center; flex: none; }
a { color: inherit; text-decoration: none; }
svg { display: block; flex: none; }
.defs { position: absolute; width: 0; height: 0; }
.desktop { display: grid; grid-template-columns: 1fr 1fr; min-height: 100vh; }
.screen { display: flex; flex-direction: column; min-width: 0; }
.window { flex: 1; display: flex; flex-direction: column; min-height: 0; }

.titlebar { display: flex; justify-content: space-between; align-items: center; height: 24px; background: #fff; padding: 0 2px; }
.title { display: flex; align-items: center; gap: 5px; }
.app-icon { width: 16px; height: 16px; }
.inactive { color: #8c8c8c; }
.controls { display: flex; align-self: flex-start; }
.controls button { width: 45px; height: 20px; }
.controls svg { width: 10px; height: 10px; }
.menubar { display: flex; align-items: center; gap: 17px; background: #fff; padding: 0 8px; }
.menubar-figure { height: 24px; padding-right: 4px; }
.menubar-model { height: 20px; color: #555; }
.menubar u { text-underline-offset: 2px; }
.dock { width: 8px; height: 8px; margin-left: auto; }

.tools { display: flex; align-items: center; height: 28px; background: #f0f0f0; border-top: 1px solid #a0a0a0; border-bottom: 1px solid #a0a0a0; }
.tools button { width: 23px; height: 22px; }
.tools svg { width: 16px; height: 16px; }
.tools .on { background: #bcdcf4; border: 1px solid #90c8f6; }
.tools .drop { width: 11px; }
.tools .drop svg { width: 5px; height: 3px; }
.tools .sep { width: 8px; height: 20px; background: linear-gradient(#a5a5a5, #a5a5a5) center / 1px 100% no-repeat; }

.figure { flex: 1; display: grid; grid-template-columns: 1fr 1fr; align-content: start; column-gap: 65px; padding: 44px 135px 24px 160px; background: #f0f0f0; }
.chart { width: 100%; height: auto; font: 13px "Liberation Sans", Arial, sans-serif; fill: #262626; }
.chart .back { fill: #fff; }
.chart .grid { stroke: #dfdfdf; fill: none; }
.chart .axes { stroke: #262626; fill: none; }
.chart .line { fill: none; stroke-width: 1; stroke-linejoin: round; }
.chart .bold { stroke-width: 3; }
.chart .name { font-size: 15px; }
.chart .head { font-size: 15px; font-weight: bold; fill: #000; }
.chart .key { font-size: 12px; fill: #000; }
.chart .encoder { stroke: #0072bd; }
.chart .estimators { stroke: #d95319; }
.chart .reference { stroke: #edb120; }

.ribbon { display: flex; align-items: center; height: 42px; background: #f0f0f0; border-top: 1px solid #e3e3e3; border-bottom: 1px solid #b0b0b0; color: #777; }
.ribbon button { width: 31px; height: 40px; }
.ribbon svg { width: 20px; height: 20px; }
.ribbon .drop { width: 12px; }
.ribbon .drop svg { width: 8px; height: 5px; }
.ribbon .sep { width: 5px; height: 40px; background: linear-gradient(#c4c4c4, #c4c4c4) center / 1px 100% no-repeat; }
.stop-time { width: 80px; height: 20px; margin: 0 18px 0 10px; padding: 0 3px; border: 1px solid #c4c4c4; background: #fcfcfc; color: #777; font: inherit; }
.mode { width: 158px; height: 20px; margin-right: 9px; padding: 0 0 0 2px; border: 1px solid #bdbdbd; border-radius: 0; background: #cbcbcb; color: #777; font: inherit; }

.tabs { display: flex; height: 21px; padding-left: 1px; }
.tab { background: #fff; width: 56px; line-height: 21px; padding-left: 10px; border-right: 1px solid #d5d5d5; }
.editor { flex: 1; display: flex; min-height: 0; }
.palette { width: 32px; display: flex; flex-direction: column; align-items: center; padding: 1px 0 0; }
.palette button { width: 28px; height: 28px; }
.palette svg { width: 16px; height: 16px; }
.palette .rule { width: 20px; height: 10px; border-top: 1px solid #aaa; margin-top: 4px; }
.grow { flex: 1; }
.document { flex: 1; min-width: 0; border-left: 1px solid #83838f; border-bottom: 1px solid #83838f; background: #fff; }
.crumbs { display: flex; align-items: center; height: 31px; padding: 0 6px 0 2px; border-top: 2px solid #83838f; border-bottom: 2px solid #83838f; }
.crumb-icon { width: 16px; height: 18px; margin-right: 2px; }
.crumb-arrow { width: 5px; height: 8px; margin-left: 6px; }
.history { margin-left: auto; }
.history svg { width: 8px; height: 5px; }
.canvas-row { display: flex; border-right: 2px solid #83838f; }
.model { flex: 1; min-width: 0; height: auto; }
.scrollbar { width: 15px; display: flex; flex-direction: column; background: #f0f0f0; }
.scrollbar svg { width: 15px; height: 17px; }
.thumb { flex: 781; background: #cdcdcd; }
.track { flex: 185; }

.model .wire path { fill: none; stroke: #222; stroke-width: 1; marker-end: url(#head); }
.model .bus path { fill: none; stroke: #000; stroke-width: 2; marker-end: url(#head); }
.model .bus .gap { stroke: #fff; stroke-width: 8; marker-end: none; }
.model .mux path { stroke: #000; stroke-width: 5; }
.model .port path { fill: none; stroke: #000; stroke-width: 2; }
.model .block { fill: #fff; stroke: #222; stroke-width: 1; }
.model .block .heavy { stroke: #000; stroke-width: 2; }
.model .screen-glass { stroke: #000; }
.board { fill: #4b4b4d; }
.board .hole { fill: #fff; }
.label { font: 8px "Liberation Sans", Arial, sans-serif; fill: #222; }
.mid { text-anchor: middle; }
.end { text-anchor: end; }
.dim { fill: #888; }
.quarc { font: 10px "Liberation Sans", Arial, sans-serif; }
.quarc .red { fill: #e01020; }
.quarc .dark { fill: #222; font-size: 8px; }

.status { display: grid; grid-template-columns: 1fr 1fr auto; align-items: center; height: 20px; padding-left: 6px; padding-right: 2px; }
.status > span:first-child { width: calc(50vw / 2 - 6px); }
.status { grid-template-columns: auto 1fr auto; }
.centre { display: flex; gap: 8px; }
.status a { color: #14147a; }

.taskbar { display: flex; height: 40px; background: #05080f; color: #fff; }
.taskbar button { width: 48px; height: 40px; }
.taskbar .task { margin-left: 4px; }
.taskbar .active { background: linear-gradient(90deg, #3b3f44 44px, #22262b 44px); border-bottom: 2px solid #76b9ed; }
.taskbar .running { width: 40px; margin-left: 5px; border-bottom: 2px solid #76b9ed; }
.g12 { width: 12px; height: 12px; }
.g16 { width: 16px; height: 16px; }
.g20 { width: 20px; height: 20px; }
.g24 { width: 24px; height: 22px; }
.tray { margin-left: auto; display: flex; align-items: center; gap: 10px; padding-right: 4px; }
.clock { text-align: center; line-height: 17px; padding: 0 2px; }
.notice { width: 28px; height: 28px; margin-left: 4px; }
.badge { fill: #fff; font-size: 11px; text-anchor: middle; }
.peek { width: 1px; height: 40px; background: #6b6b6b; }
```
FILE: script.js
```js
// Plots of the recorded helicopter run. Series are [t, v, t, v, ...] lists.
const NS = "http://www.w3.org/2000/svg";
const BOX = { x: 90, y: 38, w: 642, h: 233, tmax: 45 };

let seed = 7;
function rnd() { seed = (seed * 16807) % 2147483647; return seed / 2147483647; }

function pairs(list) {
  const out = [];
  for (let i = 0; i < list.length; i += 2) out.push([list[i], list[i + 1]]);
  return out;
}

// Cubic sampling with flat extrema, so peaks stay on the recorded values.
function sampler(list) {
  const p = pairs(list), n = p.length, m = [];
  const s = i => (p[i + 1][1] - p[i][1]) / (p[i + 1][0] - p[i][0]);
  for (let i = 0; i < n; i++) {
    if (i === 0) m.push(s(0));
    else if (i === n - 1) m.push(s(n - 2));
    else {
      const a = s(i - 1), b = s(i);
      m.push(a * b <= 0 ? 0 : 2 * a * b / (a + b));
    }
  }
  return t => {
    let i = 0;
    while (i < n - 2 && t > p[i + 1][0]) i++;
    const h = p[i + 1][0] - p[i][0];
    const u = Math.max(0, Math.min(1, (t - p[i][0]) / h));
    return (1 + 2 * u) * (1 - u) ** 2 * p[i][1] + u * (1 - u) ** 2 * h * m[i] +
      u * u * (3 - 2 * u) * p[i + 1][1] + u * u * (u - 1) * h * m[i + 1];
  };
}

function smooth(list, noise = 0, step = 0.08) {
  const f = sampler(list), end = list[list.length - 2], out = [];
  for (let t = list[0]; t <= end; t += step) out.push([t, f(t) + (rnd() - 0.5) * 2 * noise]);
  return out;
}

function ripple(list, half) {
  const f = sampler(list), out = [];
  let k = 0;
  for (let t = 0; t <= 43; t += 0.03) out.push([t, f(t) + (k++ % 2 ? 1 : -1) * half * (0.55 + 0.45 * rnd())]);
  return out;
}

// bands: [upper list, lower list, step]; spikes: [t, low, high]
function quantised(bands, spikes) {
  const parts = [];
  bands.forEach(([up, lo, step]) => {
    const u = sampler(up), l = sampler(lo), seg = [];
    let k = 0;
    for (let t = up[0]; t <= up[up.length - 2]; t += step || 0.035)
      seg.push([t, k++ % 2 ? u(t) - 0.006 * rnd() : l(t) + 0.006 * rnd()]);
    parts.push({ t: up[0], seg });
  });
  spikes.forEach(([t, low, high]) => parts.push({ t, seg: [[t, 0], [t, low], [t, high], [t + 0.04, 0]] }));
  parts.sort((a, b) => a.t - b.t);
  const out = [[0, 0]];
  parts.forEach(p => { out.push([p.seg[0][0], 0], ...p.seg, [p.seg[p.seg.length - 1][0], 0]); });
  out.push([43, 0]);
  return out;
}

function el(parent, tag, attrs, text) {
  const e = document.createElementNS(NS, tag);
  for (const k in attrs) e.setAttribute(k, attrs[k]);
  if (text !== undefined) e.textContent = text;
  parent.appendChild(e);
  return e;
}

function chart(c) {
  const svg = el(document.getElementById("figure"), "svg", { class: "chart", viewBox: "0 0 780 325", role: "img", "aria-label": c.title });
  const X = t => BOX.x + t / BOX.tmax * BOX.w;
  const Y = v => BOX.y + (c.max - v) / (c.max - c.min) * BOX.h;
  const R = BOX.x + BOX.w, B = BOX.y + BOX.h;
  el(svg, "rect", { class: "back", x: BOX.x, y: BOX.y, width: BOX.w, height: BOX.h });
  let grid = "", ticks = "";
  for (let t = 0; t <= 45; t += 5) {
    const x = Math.round(X(t)) + 0.5;
    grid += `M${x} ${BOX.y}V${B}`;
    ticks += `M${x} ${B}v-6M${x} ${BOX.y}v6`;
    el(svg, "text", { x: X(t), y: B + 19, "text-anchor": "middle" }, t);
  }
  const n = Math.round((c.max - c.min) / c.step);
  for (let i = 0; i <= n; i++) {
    const v = +(c.min + i * c.step).toFixed(2), y = Math.round(Y(v)) + 0.5;
    grid += `M${BOX.x} ${y}H${R}`;
    ticks += `M${BOX.x} ${y}h6M${R} ${y}h-6`;
    el(svg, "text", { x: BOX.x - 6, y: Y(v) + 6, "text-anchor": "end" }, v);
  }
  el(svg, "path", { class: "grid", d: grid });
  el(svg, "path", { class: "axes", d: ticks + `M${BOX.x + 0.5} ${BOX.y + 0.5}H${R + 0.5}V${B + 0.5}H${BOX.x + 0.5}Z` });
  c.series.forEach(s => {
    const d = "M" + s.points.map(p => X(p[0]).toFixed(1) + " " + (Y(p[1]) + 0.5).toFixed(1)).join("L");
    el(svg, "path", { class: "line " + s.kind + (s.bold ? " bold" : ""), d });
  });
  el(svg, "text", { class: "head", x: BOX.x + BOX.w / 2, y: BOX.y - 7, "text-anchor": "middle" }, c.title);
  el(svg, "text", { class: "name", x: BOX.x + BOX.w / 2, y: B + 41, "text-anchor": "middle" }, "Time");
  const cy = BOX.y + BOX.h / 2;
  el(svg, "text", { class: "name", x: 53, y: cy, "text-anchor": "middle", transform: `rotate(-90 53 ${cy})` }, c.ylabel);
  const keys = ["Encoder", "Estimators", "Reference"].slice(0, c.keys);
  const lx = BOX.x + 516.5, ly = BOX.y + 13.5;
  el(svg, "rect", { class: "axes", style: "fill:#fff", x: lx, y: ly, width: 112, height: c.keys === 3 ? 54 : 37 });
  keys.forEach((k, i) => {
    const y = Math.round(ly + 11 + i * 16.5);
    el(svg, "path", { class: "line " + k.toLowerCase(), d: `M${lx + 8} ${y + 0.5}h40` });
    el(svg, "text", { class: "key", x: lx + 52, y: y + 5 }, k);
  });
}

const pitchRef = pairs([0,0,12,0,12,.3,18,.3,18,.6,20,.6,20,.3,24,.3,24,0,28,0,28,-.3,32,-.3,32,.3,34,.3,34,-.3,38,-.3,38,0,43,0]);
const pitchEnc = [0,0,.5,0,1,.025,1.6,-.005,2.1,-.012,2.6,-.035,3,-.038,3.5,-.055,4.1,-.042,4.7,-.047,5.2,-.038,6.2,-.028,6.8,-.012,7.4,-.03,7.8,-.02,8.3,-.035,8.7,-.015,9.3,-.038,9.8,-.022,10.2,-.038,10.8,-.01,11.3,-.028,11.8,-.018,12.2,-.01,12.5,.12,12.8,.215,13.2,.195,13.7,.275,14.2,.26,14.7,.285,15.1,.255,15.6,.245,16,.225,16.5,.22,17.1,.19,17.8,.22,18.2,.222,18.5,.33,18.8,.44,19.3,.4,19.9,.487,20.2,.43,20.6,.28,21.1,.26,21.6,.165,22.2,.175,22.8,.13,23.3,.16,23.8,.145,24.2,.15,24.5,.03,24.8,-.055,25.2,0,25.8,-.1,26.3,-.04,26.8,-.075,27.3,-.05,27.8,-.055,28.2,-.04,28.5,-.17,28.8,-.26,29.3,-.225,29.8,-.315,30.3,-.29,30.9,-.328,31.5,-.26,32.1,-.29,32.4,-.15,32.6,.1,32.9,.22,33.3,.25,33.7,.34,34,.395,34.2,.33,34.5,.05,34.8,-.13,35.2,-.085,35.6,-.25,35.9,-.305,36.4,-.28,37,-.355,37.5,-.325,38.1,-.35,38.5,-.18,38.8,-.045,39.3,-.05,39.7,.05,40.2,.03,40.8,.072,41.4,.03,41.9,.04,42.3,.01,42.7,.005,43,-.012];
const pitchEst = [0,0,.4,-.025,1,.018,1.6,-.002,2.1,-.01,2.6,-.03,3,-.033,3.5,-.048,4.1,-.038,4.7,-.042,5.2,-.033,6.2,-.02,6.8,-.005,7.4,-.022,7.8,-.012,8.3,-.025,8.7,-.008,9.3,-.028,9.8,-.012,10.2,-.032,10.8,-.005,11.3,-.02,11.8,-.01,12.2,-.015,12.5,.11,12.8,.2,13.2,.19,13.7,.27,14.2,.26,14.7,.295,15.1,.275,15.6,.27,16,.255,16.5,.25,17.2,.217,17.8,.25,18.2,.245,18.5,.36,18.8,.457,19.3,.425,19.9,.518,20.2,.47,20.6,.32,21.1,.3,21.7,.205,22.2,.225,22.8,.187,23.3,.218,23.8,.195,24.2,.21,24.5,.1,24.8,.015,25.2,.07,25.8,-.033,26.3,.02,26.8,-.015,27.3,.012,27.8,.005,28.2,.02,28.5,-.11,28.8,-.2,29.3,-.16,29.8,-.255,30.3,-.23,30.9,-.273,31.5,-.207,32.1,-.24,32.4,-.1,32.6,.11,32.9,.22,33.3,.25,33.7,.34,34,.395,34.2,.34,34.5,.08,34.8,-.095,35.2,-.052,35.6,-.2,35.9,-.262,36.4,-.232,37,-.305,37.5,-.29,38.1,-.312,38.5,-.16,38.8,-.035,39.3,-.04,39.7,.058,40.2,.035,40.8,.078,41.4,.042,41.9,.056,42.3,.028,42.7,.022,43,.005];
const elevEnc = [0,-.4,.3,-.4,.7,-.33,1,-.24,1.4,-.1,1.8,-.03,2.1,0,2.5,.005,3.2,-.005,4,-.001,5,0,6.2,.003,7.5,.01,9.5,.018,10.1,.018,10.5,.04,11.2,.12,11.8,.16,12.3,.167,13,.155,13.4,.135,14.1,.065,14.7,.045,15.4,.075,16.1,.092,17,.091,18.2,.105,19.2,.094,19.6,.105,20.3,.122,20.8,.17,21.2,.192,22,.174,23.1,.195,23.6,.155,24.1,.137,24.5,.15,25,.17,25.7,.147,27,.146,28,.138,29,.137,29.6,.123,30.2,.107,30.6,.13,31.1,.16,31.9,.175,32.3,.172,32.8,.143,33.4,.135,33.9,.1,34.5,.073,35.3,.12,35.7,.128,36.2,.12,37,.07,38,.045,38.8,.045,40,.09,41.3,.163,42,.185,43,.195];
const elevEst = [0,0,.1,-.25,.25,-.45,.4,-.5,.7,-.48,.8,-.44,1,-.39,1.3,-.3,1.7,-.22,2.1,-.155,2.3,-.145,2.6,-.155,3,-.155,3.4,-.17,4,-.15,5,-.168,6,-.153,6.5,-.168,6.9,-.152,7.3,-.165,7.8,-.155,8.5,-.163,9.1,-.148,9.6,-.16,9.8,-.15,10.2,-.155,10.8,-.1,11.4,-.04,11.8,-.012,12.3,-.008,13.2,-.035,13.6,-.08,14.1,-.145,14.6,-.175,15.2,-.182,16,-.177,16.8,-.205,17.6,-.21,18,-.22,18.4,-.2,18.8,-.245,19.1,-.27,19.5,-.26,20,-.31,20.5,-.32,20.9,-.302,21.4,-.315,22,-.335,23.1,-.34,24,-.39,24.5,-.38,25.1,-.345,25.6,-.355,26,-.32,26.5,-.315,27,-.283,28,-.268,28.5,-.258,29,-.213,29.6,-.205,30.2,-.18,30.6,-.14,31.2,-.07,31.8,-.035,32.3,-.022,33,-.06,33.5,-.085,33.9,-.13,34.2,-.18,34.5,-.192,34.8,-.18,35.2,-.13,35.6,-.11,36,-.093,36.6,-.105,37.5,-.118,38.1,-.115,38.3,-.105,38.6,-.117,39.2,-.11,40.2,-.098,40.6,-.075,41,-.035,41.5,-.005,42.3,.008,42.8,0,43,.012];
const pRateEnc = [0,.03,.4,0,.75,.08,1.4,-.07,2.4,-.07,2.8,0,3.3,-.05,3.9,.04,4.5,.03,5,.03,6,.02,6.6,.05,7.1,-.05,7.6,.05,8.1,-.06,8.6,.06,9,-.06,9.5,.05,10,-.06,10.5,.08,11,-.06,11.5,.06,12,-.06,12.2,.1,12.5,.53,12.8,.15,13,-.1,13.5,.2,14,-.07,14.5,.1,15,-.09,15.5,0,15.9,-.05,16.3,0,16.8,-.08,17.5,.08,18.1,-.03,18.3,.3,18.5,.46,18.8,.1,19.1,-.17,19.6,.22,20.4,-.42,21,.02,21.4,-.26,22,.05,22.5,-.13,23.1,.1,23.4,0,23.7,.05,24.1,.05,24.5,-.5,25,.2,25.5,-.28,26,.18,26.5,-.12,27,.1,27.5,-.08,28,.08,28.4,-.5,29,.12,29.5,-.24,30.1,.09,30.7,-.1,31.2,.17,31.7,-.12,32.1,.02,32.4,.7,32.6,.92,32.9,.2,33.1,.05,33.6,.35,33.9,.2,34.2,-.5,34.5,-1.02,34.8,-.3,35,.17,35.6,-.47,36.2,.1,36.7,-.2,37.2,.08,37.8,-.07,38.2,.2,38.5,.55,39,-.05,39.5,.25,40,-.07,40.6,.12,41.1,-.12,41.6,.06,42.1,-.1,42.5,0,42.8,-.08,43,-.06];
const pRateEst = [0,.01,.5,.01,.9,.05,1.5,-.02,2.3,-.01,3,.03,3.5,0,3.9,.02,4.5,.06,5.1,.05,5.9,.04,6.6,.07,7.1,.03,7.7,.08,8.1,.04,8.6,.1,9.1,.05,9.6,.08,10,.04,10.5,.13,11,.05,11.5,.1,12.1,.07,12.3,.3,12.6,.48,12.9,.2,13.1,.12,13.6,.27,14.1,.13,14.6,.22,15,.13,15.6,.2,16,.17,16.5,.22,17,.2,17.5,.3,18.1,.25,18.4,.55,18.6,.64,19.1,.28,19.7,.48,20.1,.25,20.5,.05,21,.33,21.5,.22,22,.42,22.5,.33,23.1,.47,23.6,.38,24,.46,24.5,.03,25.1,.46,25.6,.2,26.2,.46,26.7,.28,27.1,.4,27.5,.33,28,.36,28.5,-.08,29.1,.3,29.6,.1,30.1,.26,30.7,.13,31.2,.28,31.9,.08,32.3,.6,32.6,.86,32.9,.4,33.2,.27,33.7,.42,34,.25,34.3,-.35,34.6,-.59,34.9,0,35.2,.17,35.7,-.18,36.2,.16,36.8,-.01,37.3,.14,37.9,.03,38.2,.25,38.5,.52,39,.05,39.5,.24,40,.04,40.6,.15,41,.03,41.6,.1,42.1,.02,42.6,.08,43,.06];
const eRateEst = [0,0,.3,.03,.7,.15,1,.205,1.3,.2,1.8,.1,2.3,0,2.6,-.022,3,-.028,3.6,-.01,4.5,-.011,6,-.01,7,-.006,8.3,-.008,9.3,-.003,10,-.008,10.2,.06,10.6,.12,11,.14,11.4,.11,12,.08,12.5,.048,12.9,.06,13.1,.03,13.4,-.02,13.8,-.05,14.2,-.03,14.8,.03,15.3,.06,15.9,.05,16.4,.025,17.2,.033,18,.033,18.6,.002,19,.015,19.3,.04,20,.04,20.2,.1,20.7,.168,21.1,.13,21.6,.082,22,.1,22.6,.13,23,.12,23.2,.05,23.7,-.003,24.1,.03,24.6,.103,25,.05,25.4,.025,25.9,.035,26.8,.045,27.2,.028,28,.026,28.5,.048,29.1,.012,29.8,.008,30,0,30.3,.08,30.7,.125,31.2,.1,31.8,.085,32.1,.06,32.6,.028,33,.07,33.3,.03,33.9,-.023,34.3,.01,34.6,.075,35.1,.078,35.6,.06,36,0,36.5,-.015,37.5,-.005,38,.015,38.6,.005,39.3,.03,40,.02,40.3,.08,41,.145,41.5,.11,42,.095,42.8,.093,43,.1];
const eRateRef = pairs([0,0,10,0,10,.175,13,.175,13,0,20,0,20,.175,23,.175,23,0,30,0,30,.175,33,.175,33,0,40,0,40,.175,43,.175,43,.07]);
const eRateEnc = quantised([
  [[.3,0,.6,.2,.8,.32,1,.36,1.2,.345,1.5,.28,1.8,.2,2.1,.12,2.4,.03],[.3,0,.6,.1,.8,.26,1,.28,1.3,.23,1.7,.12,2.1,.04,2.4,0]],
  [[2.55,.005,3.2,.02],[2.55,-.075,3.2,-.075],.06],
  [[10,.05,10.3,.13,10.8,.163,11.2,.15,11.7,.11,12.2,.08],[10,0,10.5,.07,11,.085,11.5,.05,12.2,0]],
  [[12.3,.02,13,.025],[12.3,-.078,13,-.08],.055],
  [[13,0,13.3,-.04,13.8,-.07,14.3,-.04,14.6,0],[13,-.08,13.4,-.13,13.8,-.15,14.2,-.12,14.6,-.07]],
  [[14.8,.08,15.3,.098,16.2,.078],[14.8,0,15.3,.015,16.2,0]],
  [[17.1,.078,18.1,.078],[17.1,0,18.1,0],.06],
  [[18.4,0,19.1,0],[18.4,-.075,19.1,-.078],.045],
  [[19.2,.075,19.6,.085,20,.08],[19.2,0,19.6,.01,20,0]],
  [[20,.09,20.6,.155,21.2,.08],[20,0,20.6,.065,21.2,0]],
  [[21.3,0,21.9,-.002],[21.3,-.08,21.9,-.08]],
  [[22,.08,23,.08],[22,-.01,23,-.01]],
  [[23.1,0,23.6,-.045,24.1,0],[23.1,-.08,23.6,-.13,24.1,-.07]],
  [[24.2,.07,24.6,.107,25,.06],[24.2,0,24.6,.03,25,0]],
  [[25,0,25.4,-.01,25.9,0],[25,-.075,25.4,-.09,25.9,-.07]],
  [[27,.01,28.1,.01],[27,-.075,28.1,-.075],.12],
  [[28.9,0,30.1,0],[28.9,-.075,30.1,-.082]],
  [[30.1,.05,30.8,.11,31.3,.09,31.8,.08],[30.1,0,30.8,.055,31.3,.02,31.8,0]],
  [[32,.01,32.5,-.02,33,.01],[32,-.07,32.5,-.11,33,-.07]],
  [[33.2,0,33.8,-.045,34.3,0],[33.2,-.08,33.8,-.125,34.3,-.07]],
  [[34.4,.07,34.9,.112,35.7,.07],[34.4,0,34.9,.035,35.7,0]],
  [[35.8,0,36.6,-.025,37.8,0],[35.8,-.07,36.6,-.107,37.8,-.075]],
  [[38.8,.078,39.7,.08],[38.8,-.01,39.7,0],.045],
  [[40,.05,40.4,.12,40.9,.145,41.5,.11,42.3,.075],[40,0,40.5,.05,41,.065,41.6,.02,42.3,0]]
], [
  [.1,0,.078],[.25,0,.078],[3.6,-.04,.078],[3.9,-.04,.078],[4.4,0,.078],[5,0,.078],[5.4,0,.078],[6,0,.078],[6.3,0,.078],[6.6,0,.078],[6.9,0,.078],[7.1,0,.078],[7.3,0,.078],[7.6,0,.078],[7.9,-.025,.078],[8.6,0,.078],[9,0,.078],[9.3,0,.078],
  [16.5,-.075,0],[26.4,0,.078],[38.5,-.075,0],[38.6,-.03,.01],[39.9,-.02,.078],[42.5,-.03,.078],[42.7,-.03,.06],[42.9,-.035,.078],[43,-.015,.078]
]);
const travelEnc = [0,0,.4,.07,1,.11,2,.145,3,.19,4,.21,5,.235,6,.29,7,.335,8,.37,9,.395,10,.41,11,.43,12,.45,12.5,.48,13,.63,13.5,.78,14,.95,14.5,1.1,15,1.2,16,1.38,17,1.52,18,1.64,18.5,1.7,19,1.85,20,2.12,20.5,2.27,21,2.33,21.5,2.4,22,2.45,22.5,2.48,23.3,2.49,24,2.52,24.5,2.53,25,2.43,25.5,2.37,26,2.27,27,2.12,28,1.99,28.4,1.95,29,1.78,29.5,1.65,30,1.5,31,1.12,32,.82,32.5,.73,33,.87,33.5,1,34,1.2,34.4,1.32,35,1.24,35.5,1.18,36,1.03,37,.75,38,.42,38.5,.33,39.3,.33,40,.4,40.8,.5,41.5,.57,42.3,.62,43,.63];
const travelEst = smooth(travelEnc).map(([t, v]) => [t, v + (t > 20.5 && t < 29 ? 0.05 : t < 12.5 ? -0.02 : 0.012)]);

chart({ title: "Pitch", ylabel: "Pitch(rad)", min: -.4, max: .6, step: .2, keys: 3, series: [
  { kind: "encoder", points: smooth(pitchEnc) }, { kind: "estimators", points: smooth(pitchEst) }, { kind: "reference", points: pitchRef }] });
chart({ title: "Pitch rate", ylabel: "Pitch(rad/s)", min: -1.5, max: 1, step: .5, keys: 2, series: [
  { kind: "encoder", points: ripple(pRateEnc, .045) }, { kind: "estimators", points: smooth(pRateEst) }] });
chart({ title: "Elevation", ylabel: "Elevation(rad)", min: -.5, max: .2, step: .1, keys: 2, series: [
  { kind: "encoder", points: smooth(elevEnc) }, { kind: "estimators", points: smooth(elevEst, .004, .05) }] });
chart({ title: "Elevation rate", ylabel: "Elevation(rad/s)", min: -.2, max: .4, step: .1, keys: 3, series: [
  { kind: "encoder", points: eRateEnc }, { kind: "estimators", points: smooth(eRateEst, .002, .05) }, { kind: "reference", points: eRateRef }] });
chart({ title: "Travel rate", ylabel: "Travel(rad/s)", min: -.5, max: 3, step: .5, keys: 2, series: [
  { kind: "estimators", points: travelEst }, { kind: "encoder", bold: true, points: smooth(travelEnc, .012, .06) }] });
```
